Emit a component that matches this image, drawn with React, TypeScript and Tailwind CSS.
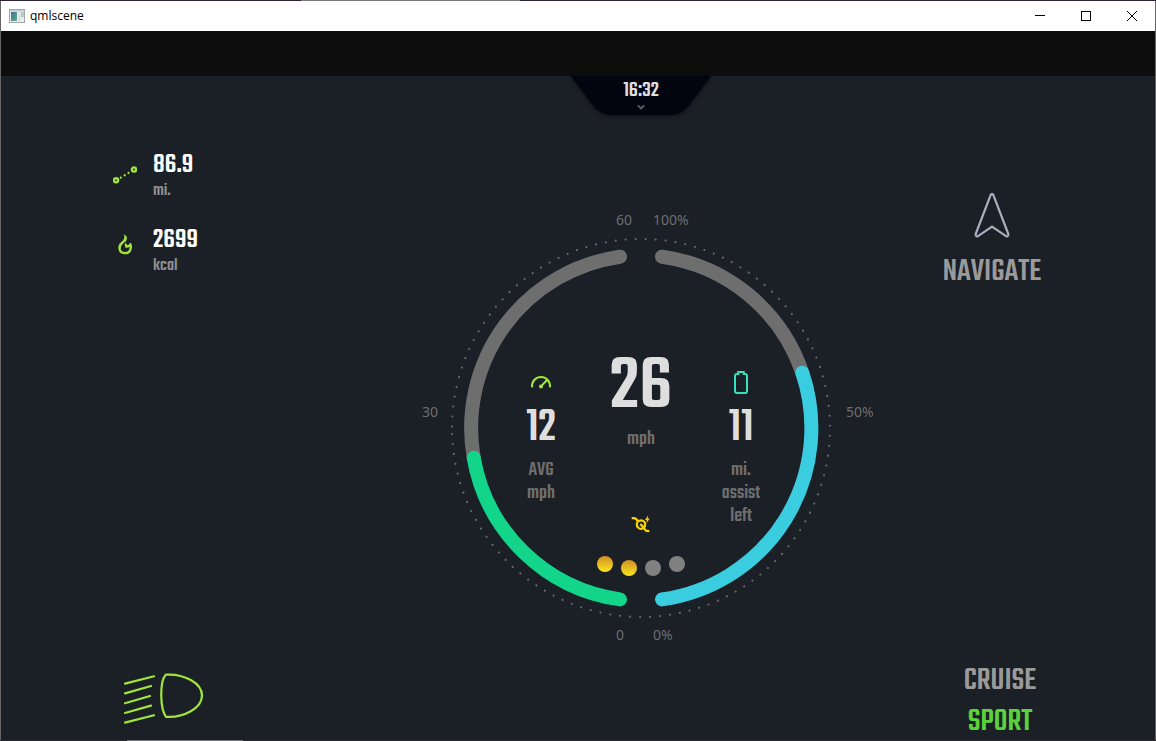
import React from "react";

const DISPLAY_FONT = "font-['Teko','Liberation_Sans_Narrow','Roboto_Condensed','Roboto',sans-serif]";

/* ---------- Icons ---------- */

function AppIcon() {
  return (
    <svg width="16" height="14" viewBox="0 0 16 14" aria-hidden="true">
      <defs>
        <linearGradient id="app-pane" x1="0" y1="0" x2="1" y2="1">
          <stop offset="0" stopColor="#3f6f95" />
          <stop offset="1" stopColor="#5bb489" />
        </linearGradient>
      </defs>
      <rect x="0.5" y="0.5" width="15" height="13" fill="#eceef0" stroke="#a3a7ab" />
      <rect x="1" y="1" width="14" height="1.5" fill="#c6cacd" />
      <rect x="2" y="3" width="6" height="9" fill="url(#app-pane)" />
      <rect x="9" y="3" width="3" height="9" fill="#dfe3e6" />
      <rect x="12" y="3" width="3" height="5" fill="#a9d3c0" />
    </svg>
  );
}

function DistanceIcon() {
  return (
    <svg width="24" height="18" viewBox="0 0 24 18" fill="none" stroke="#a0e53a" aria-hidden="true">
      <circle cx="3" cy="14.3" r="2.1" strokeWidth="2.4" />
      <circle cx="21" cy="3.5" r="2.1" strokeWidth="2.4" />
      <path d="M7.8 11.6 L17.4 5.8" strokeWidth="2.2" strokeLinecap="round" strokeDasharray="0.1 4.4" />
    </svg>
  );
}

function FlameIcon() {
  return (
    <svg width="16" height="21" viewBox="0 0 16 21" fill="none" stroke="#a0e53a" aria-hidden="true">
      <path
        d="M8.4 2.5 C9 5.6 7.4 7 5 9 C1 12.3 1.6 18.9 8 19.2 C13.6 19 14.8 13.6 13.4 10.2 C12.8 12 11.8 12.9 9.2 12.7 C9.4 11.4 9.2 10.6 8.2 9.8"
        strokeWidth="2.3"
        strokeLinejoin="round"
      />
      <path d="M6.4 0 C10.6 2.2 10.6 5.8 8.2 8.2 L6.4 7.6 C8.2 5.2 8.2 2.8 6.4 0 Z" fill="#a0e53a" stroke="none" />
    </svg>
  );
}

function HeadlightIcon() {
  return (
    <svg width="80" height="52" viewBox="0 0 80 52" fill="none" stroke="#a0e53a" strokeWidth="2.2" aria-hidden="true">
      <path
        d="M1 11.6 L30 4.3 M1 21.4 L27 14 M1 31.2 L26 24 M1 41 L27 33.6 M1 50.6 L30 43.3"
        strokeLinecap="round"
      />
      <path
        d="M42.5 2.6 C60 1.8 78 11 78 23.5 C78 36 60 46 42 44.8 C36 37 35.5 10 41.5 3 Z"
        strokeLinejoin="round"
      />
    </svg>
  );
}

function NavigateIcon() {
  return (
    <svg width="36" height="46" viewBox="0 0 36 46" fill="none" stroke="#a9adbd" strokeWidth="2.2" aria-hidden="true">
      <path
        d="M16.7 2.8 Q18 0.8 19.3 2.8 L34.3 42 Q34.5 45 32 44.2 L18 34.6 L4 44.2 Q1.5 45 1.7 42 Z"
        strokeLinejoin="round"
      />
    </svg>
  );
}

function SpeedIcon() {
  return (
    <svg width="22" height="14" viewBox="0 0 22 14" fill="none" stroke="#a0e53a" strokeWidth="2.1" aria-hidden="true">
      <path d="M2 12.4 C1.6 6 6 2 11 2 C16 2 20.4 6 20 12.4" />
      <path d="M11 11.4 L17 5" />
      <circle cx="11" cy="11.4" r="2" fill="#a0e53a" stroke="none" />
    </svg>
  );
}

function BatteryIcon() {
  return (
    <svg width="14" height="24" viewBox="0 0 14 24" fill="none" stroke="#36e0bd" strokeWidth="2" aria-hidden="true">
      <path d="M4.2 4 V2 H9.8 V4 H11 Q13 4 13 6 V21 Q13 23 11 23 H3 Q1 23 1 21 V6 Q1 4 3 4 Z" />
    </svg>
  );
}

function AssistIcon() {
  return (
    <svg width="20" height="18" viewBox="0 0 20 18" fill="none" stroke="#fdd20a" strokeWidth="2.2" aria-hidden="true">
      <path d="M1.6 3.2 Q5.2 2.6 6.6 6" strokeLinecap="round" />
      <circle cx="10" cy="9.6" r="4.2" />
      <path d="M10 9.6 L14.4 15 Q15 16.4 18.4 16" />
      <path d="M9 10.8 L10 8.6 L12 10.6" strokeWidth="1" />
      <path d="M17.2 0.2 L14 4.9 H15.8 L15.4 8.2 L18.8 3.6 H16.8 Z" fill="#fdd20a" stroke="none" />
    </svg>
  );
}

/* ---------- Window chrome ---------- */

function TitleBar() {
  return (
    <header className="flex h-[30px] items-center bg-white text-black">
      <div className="flex flex-1 items-center gap-[5px] pl-2">
        <AppIcon />
        <h1 className="font-['Segoe_UI','Open_Sans',sans-serif] text-xs">qmlscene</h1>
      </div>
      <button type="button" aria-label="Minimize" className="flex h-full w-[46px] items-center justify-center">
        <svg width="10" height="10" viewBox="0 0 10 10" stroke="currentColor" shapeRendering="crispEdges">
          <path d="M0 4.5 H10" />
        </svg>
      </button>
      <button type="button" aria-label="Maximize" className="flex h-full w-[46px] items-center justify-center">
        <svg width="10" height="10" viewBox="0 0 10 10" fill="none" stroke="currentColor" shapeRendering="crispEdges">
          <rect x="0.5" y="0.5" width="9" height="9" />
        </svg>
      </button>
      <button type="button" aria-label="Close" className="flex h-full w-[46px] items-center justify-center">
        <svg width="10" height="10" viewBox="0 0 10 10" stroke="currentColor">
          <path d="M0 0 L10 10 M10 0 L0 10" />
        </svg>
      </button>
    </header>
  );
}

/* ---------- Dashboard parts ---------- */

function Clock() {
  return (
    <button type="button" className="relative flex h-10 w-[140px] flex-col items-center">
      <svg className="absolute inset-x-0 top-0 overflow-visible drop-shadow-[0_1px_2px_rgba(0,0,0,0.5)]" width="140" height="40" viewBox="0 0 140 40" aria-hidden="true">
        <path d="M0 0 H140 L119 28 Q111 39 101 39 H39 Q29 39 21 28 Z" fill="#02050f" />
      </svg>
      <span className="relative pt-0.5 text-[22px] leading-[26px] font-medium text-[#dedede]">16:32</span>
      <svg className="relative" width="8" height="6" viewBox="0 0 8 6" fill="none" stroke="#5c6178" strokeWidth="1.8" aria-hidden="true">
        <path d="M0.8 1.4 L4 4.4 L7.2 1.4" />
      </svg>
    </button>
  );
}

function Stat({ icon, value, unit }: { icon: React.ReactNode; value: string; unit: string }) {
  return (
    <div className="flex items-center gap-4">
      <div className="flex w-6 justify-center">{icon}</div>
      <div className="pt-1 font-medium">
        <div className="text-[28px] leading-7 text-white">{value}</div>
        <div className="text-lg leading-6 text-[#8e8e8e]">{unit}</div>
      </div>
    </div>
  );
}

const RING_RADIUS = 189;
const RING_DOTS = Array.from({ length: 119 }, (_, i) => {
  const angle = (6 + i * 10) / RING_RADIUS;
  return {
    x: 240 - RING_RADIUS * Math.cos(angle),
    y: 220 + RING_RADIUS * Math.sin(angle),
  };
});

function GaugeDial() {
  return (
    <svg className="absolute inset-0" width="480" height="440" viewBox="0 0 480 440" role="img" aria-label="Speed and battery">
      {RING_DOTS.map((dot, i) => (
        <circle key={i} cx={dot.x} cy={dot.y} r="1.1" fill="#686a6c" />
      ))}
      <g fill="none" strokeWidth="14" strokeLinecap="round">
        <path d="M219 48.7 A173 173 0 0 0 72.7 249.7" stroke="#6e6e6e" />
        <path d="M261 48.7 A173 173 0 0 1 401.3 164.7" stroke="#6e6e6e" />
        <path d="M72.7 249.7 A173 173 0 0 0 219 391.4" stroke="#12d58a" />
        <path d="M401.3 164.7 A173 173 0 0 1 261 391.4" stroke="#3accdf" />
      </g>
      <g className="font-['Noto_Sans',sans-serif] text-sm" fill="#6e6e6e">
        <text x="215" y="17">60</text>
        <text x="252" y="17">100%</text>
        <text x="21" y="209">30</text>
        <text x="445" y="209">50%</text>
        <text x="215" y="432">0</text>
        <text x="252" y="432">0%</text>
      </g>
    </svg>
  );
}

function SideReading({ icon, value, lines }: { icon: React.ReactNode; value: string; lines: string[] }) {
  return (
    <div className="mt-[22px] flex flex-col items-center">
      <div className="flex h-7 items-center">{icon}</div>
      <div className="mt-0.5 text-5xl leading-[61px] font-medium text-[#dedede]">{value}</div>
      {lines.map((line) => (
        <div key={line} className="text-xl leading-[23px] font-medium text-[#6e6e6e]">
          {line}
        </div>
      ))}
    </div>
  );
}

function AssistLevel() {
  const on = "bg-linear-to-b from-[#d08e24] to-[#f8e71c]";
  const off = "bg-[#808080]";
  return (
    <div className="mt-[23px] flex gap-2" role="meter" aria-label="Assist level" aria-valuenow={2} aria-valuemin={0} aria-valuemax={4}>
      <span className={`size-4 rounded-full ${on}`} />
      <span className={`mt-1 size-4 rounded-full ${on}`} />
      <span className={`mt-1 size-4 rounded-full ${off}`} />
      <span className={`size-4 rounded-full ${off}`} />
    </div>
  );
}

function Gauge() {
  return (
    <section className="relative mt-[92px] h-[440px] w-[480px]">
      <GaugeDial />
      <div className="relative grid grid-cols-[100px_100px_100px] items-start justify-center pt-[138px]">
        <SideReading icon={<SpeedIcon />} value="12" lines={["AVG", "mph"]} />
        <div className="flex flex-col items-center pt-1.5">
          <div className="text-[80px] leading-[72px] font-medium text-[#dedede]">26</div>
          <div className="mt-1 mb-16 text-xl leading-[23px] font-medium text-[#6e6e6e]">mph</div>
          <AssistIcon />
          <AssistLevel />
        </div>
        <SideReading icon={<BatteryIcon />} value="11" lines={["mi.", "assist", "left"]} />
      </div>
    </section>
  );
}

export default function App() {
  return (
    <div className="flex min-h-screen flex-col bg-[#1b1f26]">
      <div className="flex h-px bg-[#2b2333]">
        <div className="ml-[26%] w-[19%] bg-[#777777]" />
      </div>
      <div className="flex flex-1 flex-col border-x border-[#666666]">
        <TitleBar />
        <div className="h-[45px] bg-[#0d0d0d]" />
        <main className={`grid flex-1 grid-cols-[400fr_480px_274fr] ${DISPLAY_FONT}`}>
          <div className="flex flex-col items-start justify-between pt-[71px] pb-4 pl-28">
            <div className="flex flex-col gap-[19px]">
              <Stat icon={<DistanceIcon />} value="86.9" unit="mi." />
              <Stat icon={<div className="pb-3"><FlameIcon /></div>} value="2699" unit="kcal" />
            </div>
            <button type="button" aria-label="Headlight" className="ml-[11px]">
              <HeadlightIcon />
            </button>
          </div>

          <div className="flex flex-col items-center">
            <Clock />
            <Gauge />
          </div>

          <div className="flex flex-col justify-between pt-[116px]">
            <button type="button" className="flex flex-col items-center gap-3.5 pr-[52px]">
              <NavigateIcon />
              <span className="text-[32px] leading-10 font-medium text-[#9a9a9a]">NAVIGATE</span>
            </button>
            <div className="flex flex-col items-center pr-9 text-[32px] leading-[41px] font-medium">
              <button type="button" className="text-[#9a9a9a]">CRUISE</button>
              <button type="button" className="-mb-[3px] text-[#5bd23d]">SPORT</button>
            </div>
          </div>
        </main>
      </div>
      <div className="flex h-px bg-[#2a2a2c]">
        <div className="ml-[11%] w-[10%] bg-[#777777]" />
      </div>
    </div>
  );
}
